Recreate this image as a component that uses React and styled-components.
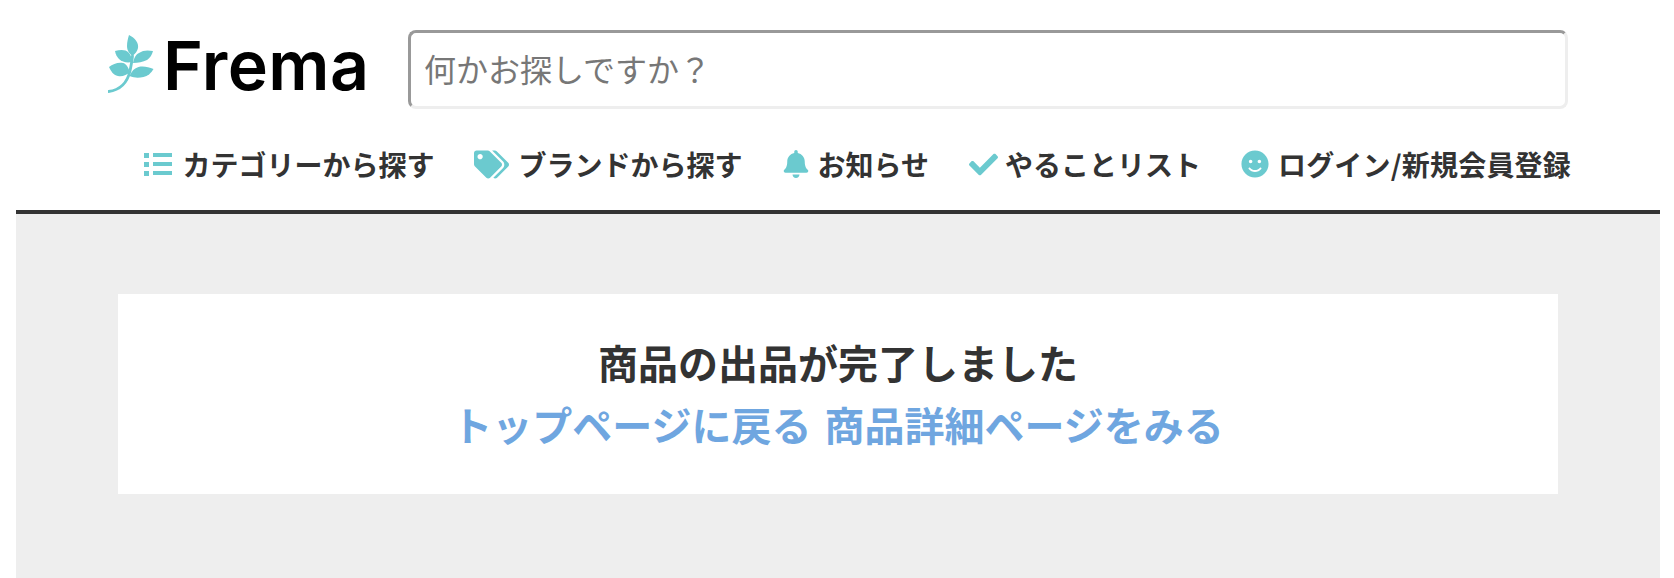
import React from 'react';
import { FaBell, FaCheck, FaSmile, FaTags } from 'react-icons/fa';
import styled, { createGlobalStyle } from 'styled-components';

const GlobalStyle = createGlobalStyle`
  html, body {
    margin: 0;
    background: #fff;
  }
  body {
    font-family: "Noto Sans CJK JP", "Liberation Sans", sans-serif;
    color: #333;
  }
`;

const Page = styled.div`
  box-sizing: border-box;
  width: 1674px;
  height: 578px;
  padding: 0 14px 0 16px;
  display: flex;
  flex-direction: column;
`;

const Header = styled.header`
  box-sizing: border-box;
  height: 214px;
  padding-top: 30px;
  border-bottom: 4px solid #333;
`;

const TopRow = styled.div`
  display: flex;
  align-items: flex-start;
  padding-left: 92px;
`;

const LogoLink = styled.a`
  display: flex;
  align-items: flex-start;
  width: 300px;
  padding-top: 5px;
  color: #000;
  text-decoration: none;
`;

const LogoText = styled.span`
  margin-left: 9px;
  font-family: Inter, "Liberation Sans", sans-serif;
  font-size: 68px;
  font-weight: 600;
  line-height: 60px;
  letter-spacing: 0.4px;
`;

const SearchInput = styled.input`
  box-sizing: border-box;
  width: 1160px;
  height: 79px;
  padding: 0 13px 4px;
  border-width: 3px;
  border-style: solid;
  border-color: #999 #eee #eee #999;
  border-radius: 8px;
  outline: none;
  font-family: inherit;
  font-size: 32px;

  &::placeholder {
    color: #777;
    opacity: 1;
  }
`;

const Nav = styled.nav`
  display: flex;
  justify-content: flex-end;
  gap: 40px;
  margin-top: 35px;
  padding-right: 89px;
`;

const NavItem = styled.a`
  display: flex;
  align-items: center;
  gap: ${(props) => props.$gap}px;
  color: #333;
  font-size: 28px;
  font-weight: 700;
  line-height: 40px;
  letter-spacing: ${(props) => props.$tracking}px;
  white-space: nowrap;
  text-decoration: none;

  svg {
    color: #6bcacf;
    font-size: ${(props) => props.$iconSize}px;
  }
`;

const Main = styled.main`
  flex: 1;
  padding: 80px 102px 0;
  background: #eee;
`;

const Card = styled.section`
  box-sizing: border-box;
  height: 200px;
  padding-top: 38px;
  background: #fff;
  text-align: center;
`;

const Message = styled.p`
  margin: 0 0 2px;
  font-size: 40px;
  font-weight: 700;
  line-height: 60px;
`;

const Links = styled.div`
  display: flex;
  justify-content: center;
  gap: 13px;
`;

const TextLink = styled.a`
  color: #6fa6e0;
  font-size: 40px;
  font-weight: 700;
  line-height: 60px;
  text-decoration: none;
`;

const LeafLogo = () => (
  <svg width="46" height="58" viewBox="0 0 46 58" fill="#6bcacf" aria-hidden="true">
    <path d="M0.5 56.5C12 55 19 49 22 36c1-5 2-10 2.5-15" fill="none" stroke="#6bcacf" strokeWidth="2.8" strokeLinecap="round" />
    <path d="M21 0c6 3 10 8 9 13-.5 3-3 6-5.500 8C22 19 19 16 19 11c0-4 1-8 2-11z" />
    <path d="M7 16c5-1 10-2 14 2 2 2 2.500 5 3 9-5 1-10 0-13-3-2-2-3.500-5-4-8z" />
    <path d="M45 16c-1 4-3 7-6 9-4 2-9 3-14 3 1-4 2-8 6-10 4-3 9-3 14-2z" />
    <path d="M1 32c4-3 9-5 14-4 3 .5 5 4 7 9-3 3-8 5-12 4-5-1-7-5-9-9z" />
    <path d="M45.500 34c-2 4-6 7-10 8-5 1-9 1-14-1 2-5 5-8 9-9 5-1 10 0 15 2z" />
  </svg>
);

const ListIcon = () => (
  <svg width="28" height="24" viewBox="0 0 28 24" fill="currentColor" aria-hidden="true">
    <rect x="0" y="1" width="5" height="5" />
    <rect x="0" y="10" width="5" height="5" />
    <rect x="0" y="19" width="5" height="5" />
    <rect x="9" y="1" width="19" height="4" />
    <rect x="9" y="10" width="19" height="4" />
    <rect x="9" y="19" width="19" height="4" />
  </svg>
);

const navItems = [
  { label: 'カテゴリーから探す', Icon: ListIcon, iconSize: 27, gap: 10, tracking: 0 },
  { label: 'ブランドから探す', Icon: FaTags, iconSize: 35, gap: 9, tracking: 0 },
  { label: 'お知らせ', Icon: FaBell, iconSize: 28, gap: 7, tracking: 0 },
  { label: 'やることリスト', Icon: FaCheck, iconSize: 29, gap: 7, tracking: 0 },
  { label: 'ログイン/新規会員登録', Icon: FaSmile, iconSize: 28, gap: 9, tracking: 0.2 },
];

const App = () => (
  <>
    <GlobalStyle />
    <Page>
      <Header>
        <TopRow>
          <LogoLink href="#">
            <LeafLogo />
            <LogoText>Frema</LogoText>
          </LogoLink>
          <SearchInput placeholder="何かお探しですか？" />
        </TopRow>
        <Nav>
          {navItems.map(({ label, Icon, iconSize, gap, tracking }) => (
            <NavItem href="#" key={label} $iconSize={iconSize} $gap={gap} $tracking={tracking}>
              <Icon />
              {label}
            </NavItem>
          ))}
        </Nav>
      </Header>
      <Main>
        <Card>
          <Message>商品の出品が完了しました</Message>
          <Links>
            <TextLink href="#">トップページに戻る</TextLink>
            <TextLink href="#">商品詳細ページをみる</TextLink>
          </Links>
        </Card>
      </Main>
    </Page>
  </>
);

export default App;
